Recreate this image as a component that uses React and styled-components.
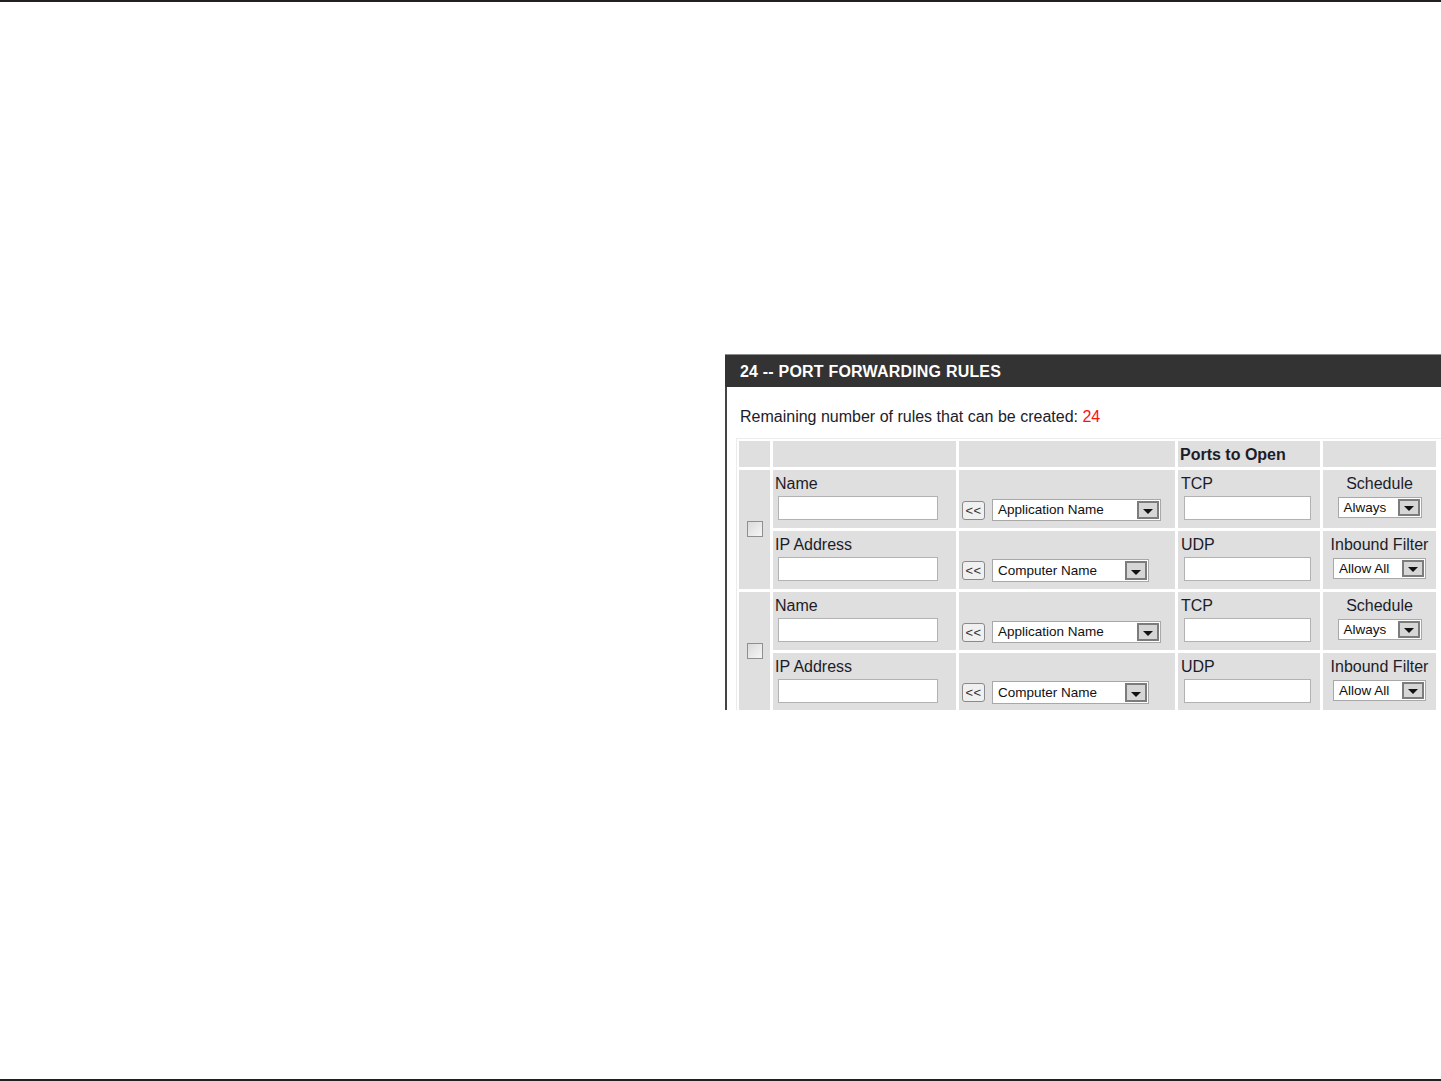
import React from "react";
import styled, { createGlobalStyle } from "styled-components";

const GlobalStyle = createGlobalStyle`
  html, body {
    margin: 0;
    padding: 0;
    background: #fff;
  }
  body {
    font-family: "Liberation Sans", Arial, sans-serif;
    overflow: hidden;
  }
`;

const Page = styled.div`
  width: 1441px;
  height: 1081px;
  display: flex;
  flex-direction: column;
  overflow: hidden;
`;

const Rule = styled.div`
  height: 2px;
  flex-shrink: 0;
  background: #231f20;
`;

const Content = styled.div`
  flex: 1;
  padding: 352px 0 0 725px;
`;

const Panel = styled.section`
  width: 716px;
  height: 356px;
  overflow: hidden;
  background: #fff;
  display: flex;
  flex-direction: column;
`;

const PanelHeader = styled.h2`
  margin: 0;
  height: 33px;
  box-sizing: border-box;
  background: #333333;
  border-top: 1px solid #8c8c8c;
  color: #fff;
  font-size: 16px;
  font-weight: bold;
  line-height: 34px;
  padding-left: 15px;
  letter-spacing: 0.2px;
`;

const PanelBody = styled.div`
  flex: 1;
  border-left: 2px solid #444;
`;

const Intro = styled.p`
  margin: 0;
  padding: 20px 0 12px 13px;
  font-size: 16px;
  line-height: 20px;
  color: #1c1c2a;
`;

const Count = styled.span`
  color: #ff1010;
`;

const RuleGrid = styled.div`
  margin-left: 10px;
  padding: 2px;
  display: grid;
  grid-template-columns: 31px 183px 216px 142px 113px;
  grid-auto-rows: 58px;
  grid-template-rows: 26px;
  gap: 3px;
  background: #fff;
  outline: 1px solid #ececec;
`;

const Cell = styled.div`
  background: #dfdfdf;
  box-sizing: border-box;
  padding: ${(p) => p.$pad || "4px 0 0 2px"};
  display: flex;
  flex-direction: column;
  align-items: ${(p) => (p.$center ? "center" : "flex-start")};
  font-size: 16px;
  line-height: 20px;
  color: #1c1c2a;
  ${(p) => p.$span && "grid-row: span 2; justify-content: center;"}
`;

const HeadText = styled.span`
  font-weight: bold;
  line-height: 27px;
  margin-left: 1px;
`;

const TextInput = styled.div`
  width: ${(p) => p.$w}px;
  height: 24px;
  box-sizing: border-box;
  margin: 2px 0 0 3px;
  background: #fff;
  border: 1px solid #b2b2b2;
`;

const PickRow = styled.div`
  display: flex;
  align-items: center;
  gap: 7px;
  margin: ${(p) => p.$top}px 0 0 1px;
`;

const CopyButton = styled.div`
  width: 23px;
  height: 19px;
  box-sizing: border-box;
  border: 1px solid #8a8a8a;
  border-radius: 3px;
  background: #f0f0f0;
  font-size: 13px;
  line-height: 17px;
  text-align: center;
  color: #333;
  letter-spacing: 0.5px;
`;

const Select = styled.div`
  width: ${(p) => p.$w}px;
  height: ${(p) => p.$h || 21}px;
  box-sizing: border-box;
  margin-top: ${(p) => p.$top || 0}px;
  display: flex;
  align-items: center;
  justify-content: space-between;
  background: #fff;
  border: 1px solid #a8a8a8;
  padding: 1px;
  font-size: 13.5px;
  color: #111;
`;

const SelectText = styled.span`
  padding-left: 4px;
  line-height: 16px;
`;

const Arrow = styled.span`
  width: 22px;
  height: 100%;
  box-sizing: border-box;
  border: 2px solid #7c7c7c;
  background: #d6d6d6;
  display: flex;
  align-items: flex-end;
  justify-content: center;
  padding-bottom: 3px;
  &::after {
    content: "";
    border-left: 5px solid transparent;
    border-right: 5px solid transparent;
    border-top: 5px solid #111;
  }
`;

const CheckBox = styled.span`
  width: 16px;
  height: 16px;
  box-sizing: border-box;
  border: 1px solid #8f8f8f;
  background: linear-gradient(135deg, #dadada, #f6f6f6);
  margin: -2px 0 0 1px;
`;

const CenterLabel = styled.span`
  line-height: 22px;
  margin-top: -1px;
`;

function Dropdown({ label, w, h, top }) {
  return (
    <Select $w={w} $h={h} $top={top}>
      <SelectText>{label}</SelectText>
      <Arrow />
    </Select>
  );
}

function RuleRows() {
  return (
    <>
      <Cell $span $center $pad="0">
        <CheckBox />
      </Cell>
      <Cell>
        Name
        <TextInput $w={160} />
      </Cell>
      <Cell $pad="0 0 0 2px">
        <PickRow $top={29}>
          <CopyButton>&lt;&lt;</CopyButton>
          <Dropdown label="Application Name" w={169} h={22} />
        </PickRow>
      </Cell>
      <Cell $pad="4px 0 0 3px">
        TCP
        <TextInput $w={127} />
      </Cell>
      <Cell $center $pad="4px 0 0 0">
        <CenterLabel>Schedule</CenterLabel>
        <Dropdown label="Always" w={84} h={21} top={2} />
      </Cell>

      <Cell>
        IP Address
        <TextInput $w={160} />
      </Cell>
      <Cell $pad="0 0 0 2px">
        <PickRow $top={28}>
          <CopyButton>&lt;&lt;</CopyButton>
          <Dropdown label="Computer Name" w={157} h={23} />
        </PickRow>
      </Cell>
      <Cell $pad="4px 0 0 3px">
        UDP
        <TextInput $w={127} />
      </Cell>
      <Cell $center $pad="4px 0 0 0">
        <CenterLabel>Inbound Filter</CenterLabel>
        <Dropdown label="Allow All" w={93} h={21} top={2} />
      </Cell>
    </>
  );
}

export default function App() {
  return (
    <Page>
      <GlobalStyle />
      <Rule />
      <Content>
        <Panel>
          <PanelHeader>24 -- PORT FORWARDING RULES</PanelHeader>
          <PanelBody>
            <Intro>
              Remaining number of rules that can be created: <Count>24</Count>
            </Intro>
            <RuleGrid>
              <Cell />
              <Cell />
              <Cell />
              <Cell $pad="0 0 0 1px">
                <HeadText>Ports to Open</HeadText>
              </Cell>
              <Cell />
              <RuleRows />
              <RuleRows />
            </RuleGrid>
          </PanelBody>
        </Panel>
      </Content>
      <Rule />
    </Page>
  );
}
